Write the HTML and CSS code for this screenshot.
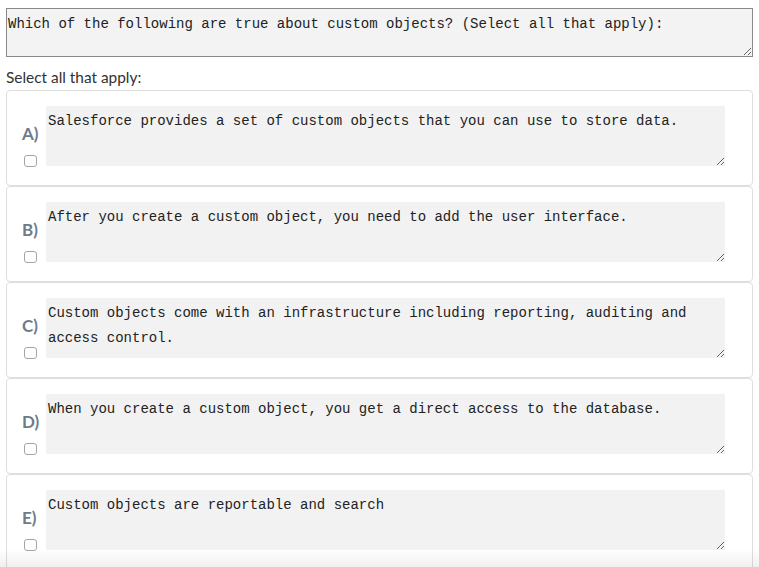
FILE: index.html
```html
<!DOCTYPE html>
<html>
<head>
<meta charset="utf-8">
<link rel="stylesheet" href="styles.css">
</head>
<body>
<div class="page">
  <textarea class="question" readonly>Which of the following are true about custom objects? (Select all that apply):</textarea>
  <div class="hint">Select all that apply:</div>
  <div class="options">
    <div class="card">
      <div class="side"><span class="letter">A)</span><span class="box"></span></div>
      <textarea class="answer" readonly>Salesforce provides a set of custom objects that you can use to store data.</textarea>
    </div>
    <div class="card">
      <div class="side"><span class="letter">B)</span><span class="box"></span></div>
      <textarea class="answer" readonly>After you create a custom object, you need to add the user interface.</textarea>
    </div>
    <div class="card">
      <div class="side"><span class="letter">C)</span><span class="box"></span></div>
      <textarea class="answer" readonly>Custom objects come with an infrastructure including reporting, auditing and access control.</textarea>
    </div>
    <div class="card">
      <div class="side"><span class="letter">D)</span><span class="box"></span></div>
      <textarea class="answer" readonly>When you create a custom object, you get a direct access to the database.</textarea>
    </div>
    <div class="card">
      <div class="side"><span class="letter">E)</span><span class="box"></span></div>
      <textarea class="answer" readonly>Custom objects are reportable and search</textarea>
    </div>
  </div>
</div>
<div class="fade"></div>
</body>
</html>
```

FILE: styles.css
```css
html, body {
  margin: 0;
  padding: 0;
  background: #ffffff;
  overflow: hidden;
}
.page {
  padding: 8px 6px 0 6px;
  width: 747px;
  display: flex;
  flex-direction: column;
}
textarea {
  font-family: "Liberation Mono", "Courier New", monospace;
  font-size: 14px;
  color: #222;
  box-sizing: border-box;
  outline: none;
  margin: 0;
}
.question {
  display: block;
  width: 747px;
  height: 49px;
  border: 1px solid #8a8a8a;
  background: #f3f3f3;
  padding: 6px 1px 4px 1px;
  line-height: 18px;
}
.hint {
  font-family: Lato, "Noto Sans", sans-serif;
  font-size: 15.4px;
  color: #333;
  margin-top: 10px;
  height: 23px;
  line-height: 20px;
}
.options {
  display: flex;
  flex-direction: column;
}
.card {
  display: flex;
  align-items: stretch;
  border: 1px solid #dedede;
  border-radius: 4px;
  padding: 15px 27px 18px 15px;
  background: #fff;
  height: 96px;
  box-sizing: border-box;
}
.side {
  width: 24px;
  flex: none;
  display: flex;
  flex-direction: column;
  align-items: flex-start;
  padding-top: 18px;
}
.letter {
  font-family: Lato, "Noto Sans", sans-serif;
  font-weight: 700;
  font-size: 17px;
  color: #6e7b8b;
  line-height: 20px;
  height: 20px;
}
.box {
  display: block;
  width: 13px;
  height: 13px;
  margin: 11px 0 0 2px;
  border: 1px solid #a5a5a5;
  border-radius: 3px;
  box-sizing: border-box;
  background: #fff;
}
.answer {
  flex: 1;
  height: 60px;
  border: none;
  background: #f2f2f2;
  padding: 3px 2px 1px 2px;
  line-height: 25px;
}
.fade {
  position: fixed;
  left: 0;
  right: 0;
  bottom: 0;
  height: 18px;
  background: linear-gradient(rgba(0,0,0,0), rgba(0,0,0,0.06));
  pointer-events: none;
}
```
